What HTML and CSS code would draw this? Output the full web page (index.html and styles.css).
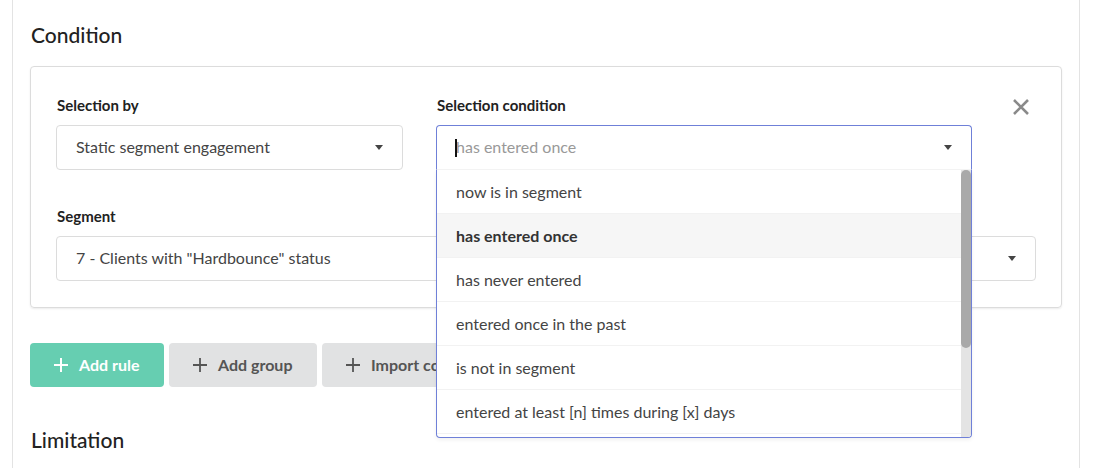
FILE: index.html
```html
<!DOCTYPE html>
<html>
<head>
<meta charset="utf-8">
<link rel="stylesheet" href="styles.css">
</head>
<body>
<div class="page">
  <h2 class="section-title">Condition</h2>
  <div class="card">
    <div class="row-top">
      <div class="field field-by">
        <div class="label">Selection by</div>
        <div class="select">
          <span class="select-text">Static segment engagement</span>
          <span class="caret"></span>
        </div>
      </div>
      <div class="field field-cond">
        <div class="label">Selection condition</div>
        <div class="select select-open">
          <span class="cursor"></span>
          <span class="select-text placeholder">has entered once</span>
          <span class="caret"></span>
        </div>
        <div class="dropdown">
          <ul class="options">
            <li class="option">now is in segment</li>
            <li class="option option-active">has entered once</li>
            <li class="option">has never entered</li>
            <li class="option">entered once in the past</li>
            <li class="option">is not in segment</li>
            <li class="option">entered at least [n] times during [x] days</li>
            <li class="option">entered at most [n] times</li>
          </ul>
          <div class="scrollbar"><div class="thumb"></div></div>
        </div>
      </div>
      <div class="close">
        <svg width="18" height="18" viewBox="0 0 18 18"><path d="M2 2L16 16M16 2L2 16" stroke="#8a8a8a" stroke-width="2.6" fill="none"/></svg>
      </div>
    </div>
    <div class="field field-seg">
      <div class="label">Segment</div>
      <div class="select">
        <span class="select-text">7 - Clients with "Hardbounce" status</span>
        <span class="caret"></span>
      </div>
    </div>
  </div>
  <div class="actions">
    <button class="btn btn-primary"><svg class="plus" width="14" height="14" viewBox="0 0 14 14"><path d="M7 0V14M0 7H14" stroke="currentColor" stroke-width="2" fill="none"/></svg>Add rule</button>
    <button class="btn btn-secondary btn-group"><svg class="plus" width="14" height="14" viewBox="0 0 14 14"><path d="M7 0V14M0 7H14" stroke="currentColor" stroke-width="1.8" fill="none"/></svg>Add group</button>
    <button class="btn btn-secondary btn-import"><svg class="plus" width="14" height="14" viewBox="0 0 14 14"><path d="M7 0V14M0 7H14" stroke="currentColor" stroke-width="1.8" fill="none"/></svg>Import conditions</button>
  </div>
  <h2 class="section-title section-limit">Limitation</h2>
</div>
</body>
</html>
```
FILE: styles.css
```css
* { box-sizing: border-box; }
html, body { margin: 0; padding: 0; background: #fff; }
body {
  font-family: Lato, "Noto Sans", "Liberation Sans", sans-serif;
  color: #333;
  height: 468px;
  overflow: hidden;
}
.page {
  margin-left: 12px;
  width: 1068px;
  min-height: 468px;
  border-left: 1px solid #e3e3e3;
  border-right: 1px solid #e3e3e3;
  padding: 20px 17px 0 17px;
}
.section-title {
  margin: 0;
  font-size: 21px;
  font-weight: 500;
  line-height: 30px;
  color: #222;
  padding-left: 1px;
}
.card {
  margin-top: 16px;
  border: 1px solid #dcdcdc;
  border-radius: 4px;
  box-shadow: 0 1px 2px rgba(0,0,0,0.08);
  padding: 28px 25px 26px 25px;
}
.row-top {
  display: flex;
  align-items: flex-start;
}
.field { display: flex; flex-direction: column; gap: 10px; }
.field-by { width: 347px; }
.field-cond { width: 536px; margin-left: 33px; position: relative; }
.field-seg { margin-top: 36px; }
.label {
  font-size: 15px;
  font-weight: 700;
  line-height: 20px;
  color: #222;
  padding-left: 1px;
}
.select {
  height: 45px;
  border: 1px solid #dcdcdc;
  border-radius: 4px;
  display: flex;
  align-items: center;
  padding: 0 19px;
  background: #fff;
}
.select-text {
  flex: 1;
  font-size: 16px;
  line-height: 20px;
  color: #444;
  margin-top: -1px;
}
.placeholder { color: #999; }
.caret {
  width: 0; height: 0;
  border-left: 4.5px solid transparent;
  border-right: 4.5px solid transparent;
  border-top: 5px solid #444;
  margin-right: 0;
}
.select-open {
  border-color: #6f80d8;
  border-bottom-color: #f4f4f4;
  border-radius: 4px 4px 0 0;
  position: relative;
}
.cursor {
  position: absolute;
  left: 18px;
  top: 13px;
  width: 2px;
  height: 18px;
  background: #111;
}
.dropdown {
  position: absolute;
  top: 75px;
  left: 0;
  width: 536px;
  height: 268px;
  border: 1px solid #6f80d8;
  border-top: none;
  border-radius: 0 0 4px 4px;
  background: #fff;
  display: flex;
  overflow: hidden;
  z-index: 5;
  box-shadow: 0 2px 4px rgba(0,0,0,0.06);
}
.options {
  list-style: none;
  margin: 0;
  padding: 0;
  flex: 1;
}
.option {
  height: 44px;
  display: flex;
  align-items: center;
  padding-left: 19px;
  padding-bottom: 1px;
  font-size: 16px;
  color: #444;
  border-bottom: 1px solid #f2f2f2;
}
.option-active {
  background: #f6f6f6;
  font-weight: 700;
  color: #333;
}
.scrollbar {
  width: 10px;
  background: #e4e4e4;
  position: relative;
}
.thumb {
  height: 178px;
  background: #a9a9a9;
  border-radius: 5px;
}
.close {
  margin-left: 40px;
  margin-top: 3px;
  width: 18px;
  height: 18px;
  display: flex;
}
.actions {
  margin-top: 35px;
  display: flex;
  gap: 5px;
}
.btn {
  height: 44px;
  border: none;
  border-radius: 4px;
  font-family: inherit;
  font-size: 16px;
  font-weight: 700;
  display: flex;
  align-items: center;
  gap: 11px;
  padding: 0 24px 1px 24px;
}
.btn-primary { background: #66ceb1; color: #fff; width: 134px; }
.btn-secondary { background: #e1e2e3; color: #555; }
.btn-group { width: 148px; }
.btn-import { width: 200px; }
.section-limit { margin-top: 38px; }
```
